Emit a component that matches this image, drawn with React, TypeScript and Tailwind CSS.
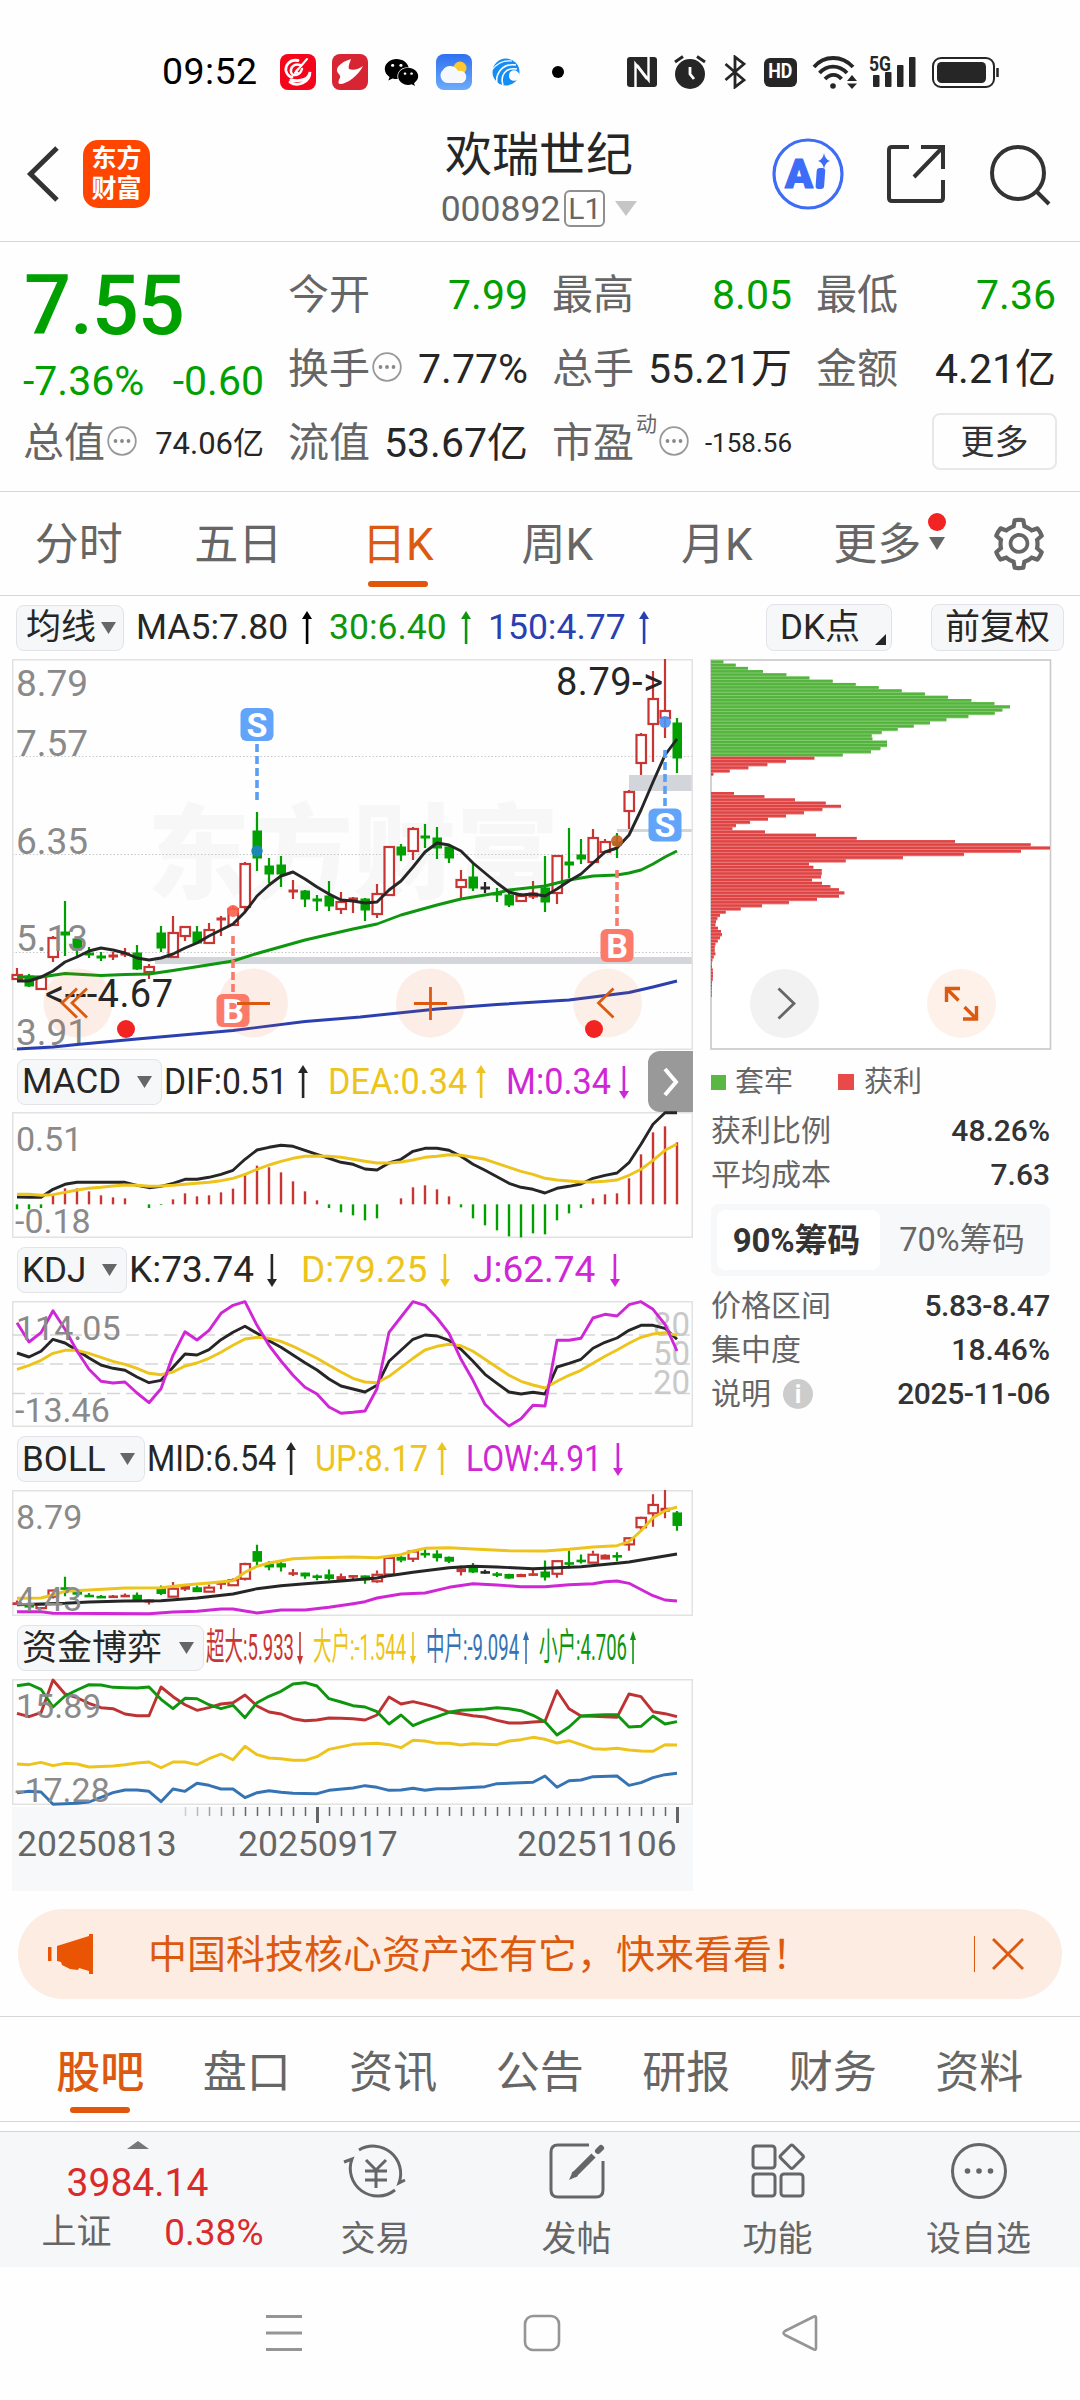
import type { ReactNode } from 'react'
import { AiOutlineSetting } from 'react-icons/ai'
import { FaWeixin } from 'react-icons/fa'

const RED = '#c83533'
const GREEN = '#00a000'
const DARK = '#262626'
const YELLOW = '#edc41c'
const PURPLE = '#cf27d6'
const BLUE = '#2a3fb0'
const ORANGE = '#dc5a10'

// [kind, high, bodyTop, bodyBottom, low], px below the top of the price pane
type Candle = ['r' | 'g' | 'k', number, number, number, number]

const CANDLES: Candle[] = [
  ['r', 309, 315, 320, 321], ['g', 315, 317, 327, 328], ['r', 317, 317, 330, 330], ['r', 277, 278, 298, 303],
  ['g', 242, 273, 276, 297], ['g', 279, 280, 291, 298], ['g', 288, 294, 296, 299], ['g', 293, 297, 299, 302],
  ['r', 293, 296, 298, 301], ['r', 289, 294, 296, 298], ['g', 286, 294, 310, 311], ['r', 305, 307, 313, 320],
  ['g', 267, 274, 289, 293], ['r', 257, 273, 298, 298], ['r', 267, 267, 277, 282], ['g', 267, 273, 284, 284],
  ['r', 264, 270, 284, 284], ['r', 257, 259, 261, 277], ['r', 247, 249, 266, 266], ['r', 203, 204, 248, 253],
  ['g', 153, 172, 199, 212], ['g', 199, 207, 215, 224], ['g', 197, 206, 215, 228], ['r', 221, 231, 233, 240],
  ['g', 231, 232, 240, 248], ['g', 236, 240, 242, 252], ['g', 222, 237, 247, 252], ['r', 233, 242, 250, 255],
  ['r', 238, 239, 242, 254], ['g', 239, 240, 251, 262], ['r', 225, 234, 255, 259], ['r', 187, 187, 236, 236],
  ['g', 185, 188, 196, 202], ['r', 168, 169, 192, 201], ['g', 165, 177, 179, 189], ['g', 168, 179, 189, 200],
  ['g', 186, 188, 199, 204], ['r', 211, 220, 228, 239], ['g', 204, 218, 229, 232], ['k', 223, 228, 230, 234],
  ['g', 229, 234, 236, 243], ['g', 234, 236, 246, 248], ['r', 234, 236, 242, 243], ['r', 222, 234, 238, 240],
  ['g', 197, 229, 243, 253], ['r', 196, 196, 234, 245], ['g', 169, 203, 206, 219], ['g', 180, 196, 200, 205],
  ['r', 170, 178, 203, 204], ['r', 180, 182, 193, 193], ['g', 174, 183, 186, 199], ['r', 131, 132, 152, 170],
  ['r', 74, 75, 104, 116], ['r', 12, 39, 65, 103], ['r', 0, 51, 59, 79], ['g', 59, 64, 99, 114],
]

const MA5 = [
  322, 322, 318, 312, 303, 298, 292, 289, 291, 294, 299, 301, 299, 295, 289, 284, 277, 271, 265, 253, 237, 226, 217,
  213, 220, 228, 235, 241, 242, 244, 243, 231, 222, 208, 193, 184, 186, 192, 204, 214, 224, 233, 236, 235, 237, 230,
  222, 215, 204, 193, 189, 176, 151, 123, 96, 80,
]

// sparse series: [day index, y]
type Point = [number, number]
const MA30: Point[] = [
  [0, 318], [2, 318], [4, 314.5], [7, 316.5], [9, 315.5], [11, 315], [13, 311.5], [18, 302], [20, 294.5], [24, 281],
  [28, 270], [30, 265], [32, 256], [35, 246], [37, 240], [40, 234], [41, 231], [44, 227], [46, 221], [48, 217],
  [50, 216], [51, 214], [52, 211], [53, 205], [54, 198], [55, 192],
]
const MA150: Point[] = [
  [0, 390], [3, 388], [5, 385.5], [10, 380], [18, 371.5], [24, 362.5], [28.6, 358], [35, 350], [40, 345.5],
  [46, 341], [51, 333.5], [53, 328], [55, 322],
]

// The series below are recorded at three units per pixel; `base` is the pane top.
const MACD_BASE = 188
const MACD_ZERO = 465
const MACD_BARS = [
  480, 480, 476, 438, 417, 417, 426, 438, 444, 447, 465, 476, 467, 450, 432, 441, 438, 429, 418, 373, 349, 354, 369,
  396, 426, 453, 476, 489, 498, 513, 507, 465, 447, 414, 408, 420, 441, 474, 507, 528, 543, 561, 564, 552, 555, 513,
  492, 476, 447, 435, 432, 387, 315, 249, 231, 279,
]
const DIF = [
  443, 444, 444, 420, 405, 399, 399, 399, 399, 399, 408, 415, 411, 402, 390, 390, 384, 375, 363, 330, 302, 294, 288,
  291, 303, 315, 327, 339, 345, 359, 362, 341, 330, 306, 297, 297, 303, 321, 345, 363, 382, 402, 414, 420, 431, 417,
  411, 404, 387, 378, 371, 340, 285, 225, 190, 190,
]
const DEA = [
  435, 435, 438, 436, 429, 422, 417, 414, 410, 407, 408, 411, 410, 408, 405, 402, 399, 394, 387, 375, 360, 347, 336,
  327, 321, 320, 321, 324, 330, 336, 341, 341, 338, 332, 324, 321, 316, 318, 324, 330, 342, 354, 366, 375, 387, 392,
  395, 398, 398, 396, 392, 378, 360, 333, 303, 284,
]

const KDJ_BASE = 755
const K = [
  911, 923, 906, 870, 881, 903, 926, 947, 957, 963, 983, 1000, 993, 954, 914, 917, 901, 871, 849, 831, 852, 874, 894,
  917, 940, 962, 989, 1010, 1019, 1028, 1008, 936, 903, 870, 857, 860, 873, 900, 936, 975, 1002, 1028, 1034, 1029,
  1034, 953, 942, 930, 897, 879, 866, 843, 828, 828, 837, 870,
]
const D = [
  960, 948, 933, 912, 903, 903, 912, 924, 936, 945, 957, 972, 976, 968, 950, 941, 927, 909, 888, 869, 864, 867, 876,
  891, 909, 927, 948, 968, 987, 998, 1000, 981, 954, 927, 902, 891, 885, 889, 906, 930, 954, 978, 996, 1007, 1016,
  996, 978, 963, 942, 921, 902, 882, 864, 854, 850, 858,
]
const J = [
  820, 878, 850, 784, 840, 905, 960, 996, 1001, 998, 1031, 1060, 1018, 918, 847, 872, 843, 792, 768, 757, 828, 888,
  935, 978, 1014, 1034, 1073, 1092, 1089, 1085, 1018, 849, 803, 757, 768, 806, 852, 930, 993, 1065, 1100, 1130, 1108,
  1068, 1070, 873, 873, 867, 806, 795, 800, 766, 757, 780, 825, 905,
]

const BOLL_BASE = 183
const BOLL_MID: Point[] = [
  [0, 527], [2, 525], [4, 523], [6, 519], [9, 516], [12, 515], [15, 507], [18, 495], [20, 479], [22, 470], [24, 464],
  [27, 456], [30, 447], [31, 440], [33, 430], [36, 416], [38, 412], [40, 414], [43, 419], [45, 416], [47, 413],
  [50, 403], [51, 399], [53, 387], [55, 375],
]
const BOLL_UP: Point[] = [
  [0, 508], [2, 507], [3, 498], [4, 487], [6, 483], [9, 477], [12, 476], [14, 468], [16, 462], [18, 455], [19, 430],
  [20, 412], [21, 402], [23, 389], [25, 386], [28, 384], [30, 386], [31, 382], [32, 377], [33, 366], [34, 358],
  [36, 356], [38, 360], [41, 365], [44, 366], [46, 361], [48, 354], [50, 350], [51, 338], [52, 305], [53, 266],
  [54, 245], [55, 234],
]
const BOLL_LOW: Point[] = [
  [0, 548], [2, 548], [3, 553], [11, 554], [13, 549], [15, 547], [17, 540], [18, 540], [19, 546], [20, 552],
  [22, 543], [24, 543], [26, 535], [28, 524], [29, 518], [30, 507], [32, 495], [34, 492], [36, 475], [38, 464],
  [40, 468], [42, 473], [44, 473], [46, 467], [48, 464], [49, 458], [50, 456], [51, 463], [53, 500], [54, 513],
  [55, 516],
]

const FLOW_BASE = 749
const FLOW_HUGE = [
  852, 862, 850, 752, 794, 805, 822, 835, 838, 854, 859, 859, 773, 802, 826, 843, 835, 824, 820, 797, 830, 848, 854,
  868, 874, 872, 866, 867, 868, 872, 857, 803, 824, 817, 825, 835, 848, 853, 859, 863, 873, 881, 881, 878, 876, 784,
  838, 860, 861, 862, 864, 794, 802, 847, 853, 862,
]
const FLOW_SMALL = [
  769, 764, 780, 833, 800, 782, 766, 767, 774, 775, 776, 773, 810, 838, 807, 808, 826, 838, 828, 865, 820, 801, 786,
  764, 760, 770, 808, 818, 829, 833, 847, 884, 857, 889, 874, 862, 849, 843, 841, 839, 835, 838, 844, 858, 877, 917,
  893, 860, 858, 856, 856, 893, 891, 860, 884, 877,
]
const FLOW_LARGE: Point[] = [
  [0, 1004], [1, 1006], [2, 999], [3, 1009], [4, 1002], [5, 1004], [6, 1013], [8, 1010], [9, 1006], [10, 1001],
  [11, 998], [12, 1015], [13, 998], [14, 998], [15, 1006], [16, 988], [17, 974], [18, 991], [19, 951], [20, 976],
  [21, 986], [22, 988], [23, 993], [24, 993], [25, 982], [26, 960], [28, 945], [30, 942], [31, 946], [32, 955],
  [33, 933], [34, 935], [35, 942], [36, 942], [37, 947], [38, 943], [40, 946], [41, 935], [42, 931], [43, 924],
  [44, 930], [45, 941], [46, 934], [47, 946], [48, 958], [49, 960], [50, 957], [51, 962], [52, 965], [53, 966],
  [54, 946], [55, 947],
]
const FLOW_MID: Point[] = [
  [0, 1090], [1, 1086], [2, 1088], [3, 1125], [5, 1122], [6, 1118], [7, 1104], [8, 1090], [9, 1082], [10, 1082],
  [11, 1086], [12, 1117], [13, 1079], [14, 1086], [15, 1062], [16, 1068], [17, 1079], [18, 1079], [19, 1105],
  [20, 1090], [21, 1084], [22, 1089], [23, 1092], [25, 1093], [26, 1083], [28, 1076], [29, 1069], [30, 1074],
  [31, 1083], [32, 1082], [33, 1077], [34, 1083], [35, 1078], [36, 1078], [39, 1072], [40, 1063], [43, 1059],
  [44, 1040], [45, 1074], [46, 1054], [47, 1052], [48, 1042], [50, 1040], [51, 1068], [52, 1060], [53, 1045],
  [54, 1036], [55, 1032],
]

// chip distribution, bar end per price level at three units per pixel
const CHIPS = [
  100, 137, 174, 219, 289, 358, 428, 497, 566, 635, 705, 774, 844, 913, 960, 937, 914, 835, 769, 720, 671, 623, 575,
  545, 547, 591, 591, 571, 543, 458, 373, 288, 232, 175, 119, 70, 63, 63, 63, 63, 63, 132, 223, 315, 407, 453, 397,
  342, 288, 234, 180, 138, 127, 225, 378, 500, 795, 1022, 1080, 993, 822, 639, 467, 357, 370, 395, 395, 393, 366,
  396, 421, 447, 463, 447, 381, 297, 216, 152, 107, 90, 82, 78, 76, 84, 93, 96, 90, 83, 76, 74, 74, 76, 71, 67, 65,
  66, 68, 69, 69, 68, 66, 66, 65, 65, 65,
]

const dayX = (i: number) => 5 + i * 12

function path(series: number[] | Point[], base?: number) {
  return series
    .map((p, i) => {
      const [day, v] = Array.isArray(p) ? p : [i, p]
      const y = base === undefined ? v : (v - base) / 3
      return `${i ? 'L' : 'M'}${dayX(day)} ${y.toFixed(1)}`
    })
    .join('')
}

function Line({ data, base, color }: { data: number[] | Point[]; base?: number; color: string }) {
  return <path d={path(data, base)} fill="none" stroke={color} strokeWidth={2.9} strokeLinejoin="round" />
}

function Candles({ scale = 1 }: { scale?: number }) {
  const minHollow = scale < 1 ? 4 : 4.5
  return (
    <g>
      {CANDLES.map(([kind, ...ys], i) => {
        const [high, top, bottom, low] = ys.map((v) => v * scale)
        const x = dayX(i)
        const color = kind === 'r' ? RED : kind === 'g' ? GREEN : DARK
        const hollow = kind === 'r' && bottom - top > minHollow
        return (
          <g key={i} stroke={color} strokeWidth={2.2}>
            <path d={`M${x} ${high}V${top}M${x} ${bottom}V${low}`} />
            {hollow ? (
              <rect x={x - 4.5} y={top + 1} width={9.5} height={bottom - top - 1} fill="white" />
            ) : (
              <rect
                x={x - 4.5}
                y={top - 0.5}
                width={9.5}
                height={Math.max(bottom - top + 1, 2.6)}
                fill={color}
                stroke="none"
              />
            )}
          </g>
        )
      })}
    </g>
  )
}

function Label({ x = 4, y, children, size = 37 }: { x?: number; y: number; children: ReactNode; size?: number }) {
  return (
    <text x={x} y={y} fontSize={size} fill="#8a8a8a">
      {children}
    </text>
  )
}

function Marker({ x, y, color, children }: { x: number; y: number; color: string; children: string }) {
  return (
    <g>
      <rect x={x - 16.5} y={y} width={33} height={33} rx={6} fill={color} />
      <text x={x} y={y + 28.5} fontSize={34} fontWeight={700} fill="white" textAnchor="middle">
        {children}
      </text>
    </g>
  )
}

function PriceChart() {
  return (
    <svg width={681} height={391} viewBox="0 0 681 391" className="block overflow-visible">
      <text x={135} y={232} fontSize={103} fontWeight={900} fill="#f7f7f7">
        东方财富
      </text>
      <g stroke="#c8c8c8" strokeDasharray="1.5 2">
        <path d="M0 97.5H681M0 195.5H681M0 293.5H681" />
      </g>
      <g fill="#d2d5da">
        <rect x={143} y={298} width={538} height={7} />
        <rect x={617} y={116} width={64} height={16} />
        <rect x={605} y={170} width={76} height={3} />
      </g>
      <rect x={0.75} y={0.75} width={679.5} height={389.5} fill="none" stroke="#e2e2e2" strokeWidth={1.5} />
      <Candles />
      <Label y={37}>8.79</Label>
      <Label y={97}>7.57</Label>
      <Label y={195}>6.35</Label>
      <Label y={292}>5.13</Label>
      <Label y={386}>3.91</Label>
      <Line data={MA150} color={BLUE} />
      <Line data={MA30} color="#0f960f" />
      <Line data={MA5} color={DARK} />
      <g fill="#ea5504" opacity={0.09}>
        <circle cx={66} cy={344} r={34.5} />
        <circle cx={241.5} cy={344} r={34.5} />
        <circle cx={418.5} cy={344} r={34.5} />
        <circle cx={595.5} cy={344} r={34.5} />
      </g>
      <text x={33} y={348} fontSize={38} fill={DARK} textLength={128}>
        &lt;---4.67
      </text>
      <text x={544} y={36} fontSize={38} fill={DARK} textLength={107}>
        8.79-&gt;
      </text>

      <g strokeWidth={3.6} strokeDasharray="8 4">
        <path d="M245 85V141" stroke="#5b9ff5" />
        <path d="M653 91V147" stroke="#5b9ff5" />
        <path d="M221 277V335" stroke="#f87b6c" />
        <path d="M605 211V268" stroke="#f87b6c" />
      </g>
      <circle cx={245} cy={192} r={5.7} fill="#1c86b4" />
      <circle cx={653} cy={63} r={6} fill="#4a92f5" opacity={0.9} />
      <circle cx={221} cy={252} r={6} fill="#f9604c" opacity={0.9} />
      <circle cx={605} cy={182} r={6} fill="#c65f22" opacity={0.9} />
      <Marker x={245} y={49} color="#61a4fa">S</Marker>
      <Marker x={653} y={149.5} color="#61a4fa">S</Marker>
      <Marker x={221} y={335} color="#fb7a69">B</Marker>
      <Marker x={605} y={270} color="#fb7a69">B</Marker>

      <g fill="none" stroke={ORANGE} strokeWidth={2.8}>
        <path d="M65 329.5L50 344L65 358.5M75 329.5L60 344L75 358.5" />
        <path d="M225 344.5H258" />
        <path d="M402 344.5H435M418.5 328V361" />
        <path d="M601.5 329.5L586.5 344L601.5 358.5" />
      </g>
      <circle cx={114} cy={370} r={9} fill="#f22323" />
      <circle cx={582} cy={370} r={9} fill="#f22323" />
    </svg>
  )
}

function Pane({ children }: { children: ReactNode }) {
  return (
    <svg width={681} height={126} viewBox="0 0 681 126" className="block overflow-visible">
      <rect x={0.75} y={0.75} width={679.5} height={124.5} fill="none" stroke="#e2e2e2" strokeWidth={1.5} />
      {children}
    </svg>
  )
}

function MacdChart() {
  const zero = (MACD_ZERO - MACD_BASE) / 3
  return (
    <Pane>
      <Label y={39} size={34}>0.51</Label>
      <Label x={3} y={121} size={34}>-0.18</Label>
      {MACD_BARS.map((v, i) => (
        <path
          key={i}
          d={`M${dayX(i)} ${zero}V${(v - MACD_BASE) / 3}`}
          stroke={v > MACD_ZERO ? GREEN : RED}
          strokeWidth={2.4}
        />
      ))}
      <Line data={DIF} base={MACD_BASE} color={DARK} />
      <Line data={DEA} base={MACD_BASE} color={YELLOW} />
    </Pane>
  )
}

function KdjChart() {
  return (
    <Pane>
      <path d="M0 34H681M0 63H681M0 92.5H681" stroke="#d6d6d6" strokeWidth={1.3} strokeDasharray="13 6" />
      <g fontSize={33} fill="#c9c9c9" textAnchor="end">
        <text x={678} y={35}>80</text>
        <text x={678} y={64}>50</text>
        <text x={678} y={93}>20</text>
      </g>
      <Line data={K} base={KDJ_BASE} color={DARK} />
      <Line data={D} base={KDJ_BASE} color={YELLOW} />
      <Line data={J} base={KDJ_BASE} color={PURPLE} />
      <Label y={39} size={34}>114.05</Label>
      <Label x={3} y={121} size={34}>-13.46</Label>
    </Pane>
  )
}

function BollChart() {
  return (
    <Pane>
      <Candles scale={0.358} />
      <Line data={BOLL_MID} base={BOLL_BASE} color={DARK} />
      <Line data={BOLL_UP} base={BOLL_BASE} color={YELLOW} />
      <Line data={BOLL_LOW} base={BOLL_BASE} color={PURPLE} />
      <Label y={39} size={34}>8.79</Label>
      <Label y={121} size={34}>4.43</Label>
    </Pane>
  )
}

function FlowChart() {
  return (
    <Pane>
      <Line data={FLOW_HUGE} base={FLOW_BASE} color="#bd3232" />
      <Line data={FLOW_LARGE} base={FLOW_BASE} color={YELLOW} />
      <Line data={FLOW_MID} base={FLOW_BASE} color="#3673b5" />
      <Line data={FLOW_SMALL} base={FLOW_BASE} color="#0f960f" />
      <Label y={39} size={34}>15.89</Label>
      <Label x={3} y={123} size={34}>-17.28</Label>
    </Pane>
  )
}

function DateAxis() {
  return (
    <div className="mt-0.5 h-[84px] bg-[#f7f8fa]">
      <svg width={681} height={17} className="block">
        {CANDLES.map((_, i) => {
          if (i < 14) return null
          const major = i === 25 || i === 55
          return (
            <path
              key={i}
              d={`M${dayX(i) + 0.5} 0V${major ? 16 : 9}`}
              stroke="#666"
              strokeWidth={major ? 3 : 1.5}
              opacity={major ? 1 : Math.min(1, (i - 12) / 7)}
            />
          )
        })}
      </svg>
      <div className="flex pl-[5px] text-[35.5px] leading-[40px] text-[#666]">
        <span className="w-[221px]">20250813</span>
        <span className="w-[279px]">20250917</span>
        <span>20251106</span>
      </div>
    </div>
  )
}

function Arrow({ up, thin }: { up?: boolean; thin?: boolean }) {
  return (
    <svg width={12} height={34} viewBox="0 0 12 34" className="shrink-0" fill="currentColor">
      <g transform={up ? undefined : 'rotate(180 6 17)'}>
        <path d={thin ? 'M6 0L9 9H3Z' : 'M6 0L11 8H1Z'} />
        <rect x={thin ? 5.2 : 4.8} y={5} width={thin ? 1.6 : 2.6} height={28} />
      </g>
    </svg>
  )
}

function Dropdown({ children, className }: { children: string; className: string }) {
  return (
    <button
      className={`flex h-[46px] shrink-0 items-center justify-between rounded-lg border-[1.5px] border-[#e1e3e8] bg-[#f6f7f9] text-[35px] leading-none text-[#262626] ${className}`}
    >
      <span>{children}</span>
      <svg width={15} height={12} viewBox="0 0 15 12" fill="#666">
        <path d="M0 0H15L7.5 12Z" />
      </svg>
    </button>
  )
}

interface LegendItem {
  text: string
  up?: boolean
  thin?: boolean
  cell: string
  label: string
  squeeze: string
}

function Legend({ items }: { items: LegendItem[] }) {
  return (
    <>
      {items.map((item) => (
        <div key={item.text} className={`flex shrink-0 items-center ${item.cell}`}>
          <span className={`shrink-0 ${item.label}`}>
            <span className={`inline-block origin-left leading-[44px] whitespace-nowrap ${item.squeeze}`}>
              {item.text}
            </span>
          </span>
          <Arrow up={item.up} thin={item.thin} />
        </div>
      ))}
    </>
  )
}

const MACD_LEGEND: LegendItem[] = [
  { text: 'DIF:0.51', up: true, cell: 'w-[164px] text-[#262626]', label: 'w-[133px]', squeeze: 'scale-x-[0.91]' },
  { text: 'DEA:0.34', up: true, cell: 'w-[178px] text-[#edc41c]', label: 'w-[147px]', squeeze: 'scale-x-[0.925]' },
  { text: 'M:0.34', cell: 'w-[129px] text-[#cf27d6]', label: 'w-[112px]', squeeze: 'scale-x-[0.925]' },
]
const KDJ_LEGEND: LegendItem[] = [
  { text: 'K:73.74', cell: 'w-[172px] text-[#262626]', label: 'w-[137px]', squeeze: 'scale-x-100' },
  { text: 'D:79.25', cell: 'w-[172px] text-[#edc41c]', label: 'w-[138px]', squeeze: 'scale-x-100' },
  { text: 'J:62.74', cell: 'w-[160px] text-[#cf27d6]', label: 'w-[136px]', squeeze: 'scale-x-100' },
]
const BOLL_LEGEND: LegendItem[] = [
  { text: 'MID:6.54', up: true, cell: 'w-[168px] text-[#262626]', label: 'w-[138px]', squeeze: 'scale-x-[0.875]' },
  { text: 'UP:8.17', up: true, cell: 'w-[151px] text-[#edc41c]', label: 'w-[121px]', squeeze: 'scale-x-[0.88]' },
  { text: 'LOW:4.91', cell: 'w-[170px] text-[#cf27d6]', label: 'w-[146px]', squeeze: 'scale-x-[0.86]' },
]
const FLOW_LEGEND: LegendItem[] = [
  { text: '超大:5.933', thin: true, cell: 'w-[107px] text-[#c83533]', label: 'w-[88px]', squeeze: 'scale-x-[0.5]' },
  { text: '大户:-1.544', thin: true, cell: 'w-[113px] text-[#edc41c]', label: 'w-[94px]', squeeze: 'scale-x-[0.5]' },
  { text: '中户:-9.094', thin: true, up: true, cell: 'w-[113px] text-[#3673b5]', label: 'w-[94px]', squeeze: 'scale-x-[0.5]' },
  { text: '小户:4.706', thin: true, up: true, cell: 'w-[107px] text-[#0f960f]', label: 'w-[88px]', squeeze: 'scale-x-[0.5]' },
]

function StatusBar() {
  return (
    <div className="flex h-[125px] items-center pt-[19px] pl-[162px] text-[#262626]">
      <span className="w-[118px] text-[37.5px] leading-none tracking-[0.4px] text-black">09:52</span>
      <svg width={36} height={36} viewBox="0 0 36 36">
        <rect width={36} height={36} rx={8} fill="#f5051a" />
        <g fill="none" stroke="white" strokeLinecap="round">
          <path d="M18 6.500C10 5 5 11 6 17C7 21 10 23 12 23" strokeWidth={2.8} />
          <path d="M27 5L15 19" strokeWidth={2} />
          <path d="M20 11C14 9 10 14 11 18C12 23 20 22 22 15" strokeWidth={2.4} />
          <path d="M10 28C17 33 30 29 30 18C29 25 22 28 11 26" strokeWidth={2.8} />
          <path d="M18 15C15 17 16 19 18 19" strokeWidth={1.8} />
        </g>
      </svg>
      <svg width={36} height={36} viewBox="0 0 36 36" className="ml-4">
        <rect width={36} height={36} rx={8} fill="#d82533" />
        <path
          d="M19 5C12 7 4 12 5 17C6 20 9 21 8 24C6 27 6 30 8 30C15 30 26 22 31 12C27 15 21 17 17 15C16 12 18 8 19 5Z"
          fill="white"
        />
      </svg>
      <FaWeixin size={35} className="ml-4 text-black" />
      <svg width={36} height={36} viewBox="0 0 36 36" className="ml-[17px]">
        <defs>
          <linearGradient id="sky" x1="0" y1="0" x2="0" y2="1">
            <stop offset="0" stopColor="#2f71f0" />
            <stop offset="1" stopColor="#6cabfb" />
          </linearGradient>
        </defs>
        <rect width={36} height={36} rx={8} fill="url(#sky)" />
        <circle cx={24} cy={14} r={6.5} fill="#fdc92e" />
        <path d="M12 29A7.5 7.5 0 0 1 7 16A8.500 8.500 0 0 1 22 17A6 6 0 0 1 26 29Z" fill="#f5f8ff" />
      </svg>
      <svg width={28} height={28} viewBox="0 0 28 28" className="ml-5">
        <circle cx={14} cy={14} r={13.5} fill="#148df5" />
        <path d="M28 17C25 10 17 11 17 18C17 22 21 24 26 22L29 16Z" fill="#fefefe" />
        <g fill="none" stroke="white" strokeWidth={1.6}>
          <path d="M5 26C3 15 11 5 24 7" />
          <path d="M11 27C8 18 13 9 25 11" />
          <path d="M0 12C5 5 12 2 20 3" strokeWidth={1.2} />
        </g>
      </svg>
      <span className="ml-[32px] size-3 rounded-full bg-black" />

      <svg width={30} height={30} viewBox="0 0 30 30" className="ml-[63px]">
        <rect width={30} height={30} rx={3} fill="currentColor" />
        <path d="M8.500 30V7L20 22" fill="none" stroke="white" strokeWidth={2.4} />
        <path d="M21.500 0V23L10 8" fill="none" stroke="white" strokeWidth={2.4} />
      </svg>
      <svg width={32} height={34} viewBox="0 0 32 34" className="ml-[17px]">
        <circle cx={16} cy={19} r={15} fill="currentColor" />
        <path d="M1 7L9 1.500M31 7L23 1.500" stroke="currentColor" strokeWidth={3} />
        <path d="M16 12V19L20 24" fill="none" stroke="white" strokeWidth={2.800} />
      </svg>
      <svg width={22} height={34} viewBox="0 0 22 34" className="ml-[18px]" fill="none">
        <path d="M1.500 9L20 25L11 32V2L20 9L1.500 25" stroke="currentColor" strokeWidth={2.800} />
      </svg>
      <span className="ml-[18px] flex h-[29px] w-[33px] items-center justify-center rounded-md bg-[#262626] text-[21px] font-bold text-white">
        <span className="scale-x-[0.85]">HD</span>
      </span>
      <svg width={46} height={34} viewBox="0 0 46 34" className="ml-[15px]" fill="none">
        <g stroke="currentColor" strokeWidth={3.800}>
          <path d="M2 12C12 0 30 0 41 12" />
          <path d="M7.500 18C15 9.500 27 9.500 35 18" />
          <path d="M13 24C18 18.500 25 18.500 29.500 24" />
        </g>
        <circle cx={21} cy={31} r={2.800} fill="currentColor" />
        <path d="M40 20L45 26H35ZM40 34L45 28.500H35Z" fill="currentColor" />
      </svg>
      <svg width={48} height={34} viewBox="0 0 48 34" className="ml-[11px] overflow-visible" fill="currentColor">
        <text x={0} y={15.500} fontSize={21} fontWeight={700} textLength={22} lengthAdjust="spacingAndGlyphs">
          5G
        </text>
        <rect x={4} y={20} width={6.500} height={12} rx={1} />
        <rect x={16} y={17} width={6.500} height={15} rx={1} />
        <rect x={28} y={10} width={6.500} height={22} rx={1} />
        <rect x={40} y={2} width={6.500} height={30} rx={1} />
      </svg>
      <svg width={67} height={31} viewBox="0 0 67 31" className="ml-[15px]">
        <rect x={1} y={1} width={61} height={29} rx={8} fill="none" stroke="currentColor" strokeWidth={2} />
        <rect x={5} y={5} width={49} height={21} rx={4.500} fill="currentColor" />
        <path d="M65.500 11V20" stroke="currentColor" strokeWidth={2.500} />
      </svg>
    </div>
  )
}

function Header() {
  return (
    <header className="flex h-[117px] items-center border-b border-[#d6d6d6] pl-[26px]">
      <svg width={34} height={56} viewBox="0 0 34 56" className="mt-[-18px]" fill="none">
        <path d="M31 2L4.500 28L31 54" stroke="#333" strokeWidth={5} />
      </svg>
      <div className="mt-[-18px] ml-[23px] flex h-[68px] w-[67px] flex-col items-center justify-center rounded-[15px] bg-[#ff4600] text-[25px] leading-[30px] font-bold text-white">
        <span>东方</span>
        <span>财富</span>
      </div>
      <div className="ml-[229px] flex w-[320px] flex-col items-center">
        <h1 className="mt-[-11px] text-[47px] leading-[56px] text-[#262626]">欢瑞世纪</h1>
        <div className="mt-[6px] flex items-center text-[35.5px] leading-[40px] text-[#666]">
          <span>000892</span>
          <span className="ml-1 flex h-[37px] w-[41px] items-center justify-center rounded-md border-2 border-[#8f8f8f] text-[30px] leading-none">
            L1
          </span>
          <svg width={22} height={15} className="ml-[10px]" fill="#c6c6c6">
            <path d="M0 0H22L11 15Z" />
          </svg>
        </div>
      </div>
      <svg width={72} height={72} viewBox="0 0 72 72" className="mt-[-18px] ml-[73px]">
        <circle cx={36} cy={36} r={34} fill="none" stroke="#3d6cf6" strokeWidth={3.2} />
        <text
          x={13}
          y={50}
          fontSize={41}
          fontWeight={900}
          fill="#3d6cf6"
          stroke="#3d6cf6"
          strokeWidth={1.2}
          strokeLinejoin="round"
          textLength={28}
          lengthAdjust="spacingAndGlyphs"
        >
          A
        </text>
        <rect x={44} y={30} width={8.500} height={21} rx={3} fill="#3d6cf6" transform="skewX(-4) translate(3 0)" />
        <path d="M52 15Q53 21.500 58 23Q53 24.500 52 31Q51 24.500 46 23Q51 21.500 52 15Z" fill="#3d6cf6" />
      </svg>
      <svg width={60} height={60} viewBox="0 0 60 60" className="mt-[-18px] ml-[42px]" fill="none">
        <path d="M23 3H6Q3 3 3 6V54Q3 57 6 57H54Q57 57 57 54V36" stroke="#333" strokeWidth={4} />
        <path d="M35 3H57V25M57 3L28 33" stroke="#333" strokeWidth={4} />
      </svg>
      <svg width={62} height={62} viewBox="0 0 62 62" className="mt-[-16px] ml-[44px]" fill="none">
        <circle cx={28} cy={29} r={26} stroke="#333" strokeWidth={4} />
        <path d="M46 47L59 60" stroke="#333" strokeWidth={4} />
      </svg>
    </header>
  )
}

function MoreDots() {
  return (
    <svg width={30} height={30} viewBox="0 0 30 30" className="mb-1 shrink-0">
      <circle cx={15} cy={15} r={13.8} fill="none" stroke="#999" strokeWidth={1.800} />
      <g fill="#888">
        <circle cx={8.500} cy={15} r={1.900} />
        <circle cx={15} cy={15} r={1.900} />
        <circle cx={21.500} cy={15} r={1.900} />
      </g>
    </svg>
  )
}

interface StatProps {
  label: string
  value: string
  dots?: boolean
  sup?: string
  className?: string
}

function Stat({ label, value, dots, sup, className = 'text-[41px] text-[#262626]' }: StatProps) {
  return (
    <div className="flex h-[74px] items-center leading-none whitespace-nowrap">
      <span className="text-[41px] text-[#666]">{label}</span>
      {sup && <span className="ml-[2px] self-start pt-[8px] text-[21px] text-[#666]">{sup}</span>}
      {dots && <span className="ml-[2px]"><MoreDots /></span>}
      <span className={`ml-auto ${className}`}>{value}</span>
    </div>
  )
}

function Quote() {
  const green = 'text-[41px] text-[#00a000]'
  return (
    <section className="flex h-[250px] border-b border-[#d6d6d6] pt-[16px] pr-[24px] pl-[23px]">
      <div className="w-[241px] text-[#00a000]">
        <div className="h-[88px] pt-[6px] pl-[1px] text-[83px] leading-[84px] font-medium tracking-[-1.2px]">7.55</div>
        <div className="flex h-[60px] items-center justify-between pt-[10px] text-[41px] leading-none">
          <span>-7.36%</span>
          <span>-0.60</span>
        </div>
        <Stat label="总值" value="74.06亿" dots className="text-[31px] text-[#262626]" />
      </div>
      <div className="ml-[24px] w-[240px]">
        <Stat label="今开" value="7.99" className={green} />
        <Stat label="换手" value="7.77%" dots />
        <Stat label="流值" value="53.67亿" />
      </div>
      <div className="ml-[24px] w-[240px]">
        <Stat label="最高" value="8.05" className={green} />
        <Stat label="总手" value="55.21万" />
        <Stat label="市盈" value="-158.56" sup="动" dots className="text-[26px] text-[#262626]" />
      </div>
      <div className="ml-[24px] w-[240px]">
        <Stat label="最低" value="7.36" className={green} />
        <Stat label="金额" value="4.21亿" />
        <div className="flex h-[71px] items-center justify-end">
          <button className="mr-[-1px] h-[57px] w-[125px] rounded-lg border-2 border-[#e8e8e8] text-[34px] leading-none text-[#333]">
            更多
          </button>
        </div>
      </div>
    </section>
  )
}

const PERIODS = ['分时', '五日', '日K', '周K', '月K']

function PeriodTabs() {
  return (
    <nav className="flex h-[104px] items-center border-b border-[#d6d6d6] text-[44px] leading-none text-[#666]">
      {PERIODS.map((p) => (
        <div
          key={p}
          className={`relative flex h-full w-[159.500px] items-center justify-center pt-[3px] pr-[2px] ${p === '日K' ? 'text-[#dc5a10]' : ''}`}
        >
          {p}
          {p === '日K' && <span className="absolute bottom-[8px] h-[6px] w-[60px] rounded-full bg-[#e0560a]" />}
        </div>
      ))}
      <div className="relative flex h-full w-[159.500px] items-center justify-center pt-[3px]">
        更多
        <span className="absolute top-[21px] right-[11px] size-[18px] rounded-full bg-[#f22323]" />
        <svg width={16} height={13} className="absolute top-[45px] right-[12px]" fill="#666">
          <path d="M0 0H16L8 13Z" />
        </svg>
      </div>
      <div className="flex flex-1 justify-center">
        <AiOutlineSetting size={60} />
      </div>
    </nav>
  )
}

function Toolbar() {
  const button =
    'h-[47px] rounded-lg border-[1.5px] border-[#e1e3e8] bg-[#f6f7f9] text-[35px] leading-none text-[#262626]'
  return (
    <div className="flex h-[63px] items-center pr-4 pl-4 text-[35.5px] leading-none">
      <Dropdown className="w-[108px] pr-[7px] pl-[9px]">均线</Dropdown>
      <span className="ml-[12px] w-[165px] text-[#262626]">MA5:7.80</span>
      <Arrow up />
      <span className="ml-[15px] w-[132px] pl-[1px] text-[#0f960f]">30:6.40</span>
      <span className="text-[#0f960f]"><Arrow up /></span>
      <span className="ml-[15px] w-[151px] pl-[1px] text-[#2a3fb0]">150:4.77</span>
      <span className="text-[#2a3fb0]"><Arrow up /></span>
      <button className={`ml-auto flex w-[126px] items-end justify-between pr-[5px] pb-[5px] pl-[13px] ${button}`}>
        <span>DK点</span>
        <svg width={11} height={11} fill="#262626">
          <path d="M11 0V11H0Z" />
        </svg>
      </button>
      <button className={`ml-[39px] w-[133px] ${button}`}>前复权</button>
    </div>
  )
}

function ChipChart() {
  return (
    <svg width={342} height={391} viewBox="0 0 342 391" className="block">
      <rect x={1} y={1} width={339.500} height={389} fill="white" stroke="#c9c9c9" strokeWidth={1.600} />
      {CHIPS.map((end, i) => {
        const width = (end - 63) / 3
        const y = 1.500 + i * 3.208
        return (
          <g key={i}>
            <rect x={1} y={y} width={width} height={3.300} fill={i < 30 ? '#86cb74' : '#f08080'} />
            <rect x={1} y={y} width={width} height={2.400} fill={i < 30 ? '#55b43e' : '#de4444'} />
          </g>
        )
      })}
      <circle cx={74.500} cy={344.500} r={34.500} fill="#f2f2f2" />
      <path d="M68.500 329.500L84 344.500L68.500 359.500" fill="none" stroke="#666" strokeWidth={2.800} />
      <circle cx={251.500} cy={344.500} r={34.500} fill="#fdf1ea" />
      <g fill="none" stroke={ORANGE} strokeWidth={3.400}>
        <path d="M250 329.500H236.500V343M236.500 329.500L248.500 341.500" />
        <path d="M266.500 347V360H253M266.500 360L254.500 348" />
      </g>
    </svg>
  )
}

interface ChipRowProps {
  label: string
  value: string
  info?: boolean
  tight?: boolean
}

function ChipRow({ label, value, info, tight }: ChipRowProps) {
  return (
    <div className="flex h-[44px] items-center justify-between text-[30px] leading-none">
      <span className="flex items-center text-[30px] text-[#666]">
        {label}
        {info && (
          <span className="ml-[12px] flex size-[30px] items-center justify-center rounded-full bg-[#ccc] text-[25px] font-bold text-white">
            i
          </span>
        )}
      </span>
      <span className={`font-medium text-[#333] ${tight ? 'tracking-[-0.4px]' : ''}`}>{value}</span>
    </div>
  )
}

function ChipPanel() {
  return (
    <aside className="ml-[17px] w-[342px]">
      <ChipChart />
      <div className="pr-[2px] pl-[1px]">
        <div className="flex h-[59px] items-center pt-[5px] text-[29px] leading-none text-[#666]">
          <span className="mr-[9px] size-[15px] bg-[#5ab744]" />
          套牢
          <span className="mr-[10px] ml-[45px] size-[16px] bg-[#e84a4a]" />
          获利
        </div>
        <ChipRow label="获利比例" value="48.26%" />
        <ChipRow label="平均成本" value="7.63" />
        <div className="mt-[7px] mb-[8px] flex h-[72px] items-center rounded-lg bg-[#f7f8fa] p-[6px] text-[32px] leading-none">
          <span className="flex h-full w-[163px] items-center justify-center rounded-lg bg-white pr-[4px] text-[33px] font-bold tracking-[-0.2px] text-[#333]">
            90%筹码
          </span>
          <span className="flex-1 text-center text-[32.500px] text-[#666]">70%筹码</span>
        </div>
        <ChipRow label="价格区间" value="5.83-8.47" tight />
        <ChipRow label="集中度" value="18.46%" />
        <ChipRow label="说明" value="2025-11-06" info tight />
      </div>
    </aside>
  )
}

function Charts() {
  const row = 'flex items-center pt-px pl-[5px] text-[37px] leading-none'
  return (
    <div className="flex pl-3">
      <div className="w-[681px]">
        <PriceChart />
        <div className={`h-[62px] ${row}`}>
          <Dropdown className="mr-[2px] w-[145px] pr-[9px] pl-[4px]">MACD</Dropdown>
          <Legend items={MACD_LEGEND} />
          <span className="ml-auto flex h-[61px] w-[45px] shrink-0 items-center justify-center rounded-l-xl bg-[#999]">
            <svg width={16} height={30} viewBox="0 0 16 30" fill="none">
              <path d="M2 2L13 15L2 28" stroke="white" strokeWidth={4} />
            </svg>
          </span>
        </div>
        <MacdChart />
        <div className={`h-[63px] ${row}`}>
          <Dropdown className="mr-[2px] w-[110px] pr-[9px] pl-[4px]">KDJ</Dropdown>
          <Legend items={KDJ_LEGEND} />
        </div>
        <KdjChart />
        <div className={`h-[63px] ${row}`}>
          <Dropdown className="mr-[2px] w-[128px] pr-[9px] pl-[4px]">BOLL</Dropdown>
          <Legend items={BOLL_LEGEND} />
        </div>
        <BollChart />
        <div className={`h-[63px] ${row} text-[35px]`}>
          <Dropdown className="mr-[2px] w-[187px] pr-[9px] pl-[4px]">资金博弈</Dropdown>
          <Legend items={FLOW_LEGEND} />
        </div>
        <FlowChart />
        <DateAxis />
      </div>
      <ChipPanel />
    </div>
  )
}

function Banner() {
  return (
    <div className="mx-[18px] mt-[18px] flex h-[90px] items-center rounded-full bg-[#fcece2] pl-[30px] text-[39px] leading-none text-[#dc5a10]">
      <svg width={46} height={40} viewBox="0 0 46 40" fill="#ea5504">
        <rect x={0} y={13} width={3.500} height={14} />
        <path d="M9 12L41 2V0H45V40H41V37L31 34L30 36L22 35L14 31L13 28L9 27Z" />
      </svg>
      <span className="ml-[54px] pt-[2px] whitespace-nowrap">中国科技核心资产还有它，快来看看！</span>
      <span className="ml-auto h-[36px] w-[1.500px] bg-[#dc5a10]" />
      <svg width={32} height={34} viewBox="0 0 32 34" className="mr-[38px] ml-[17px]">
        <path d="M1 2L31 32M31 2L1 32" stroke={ORANGE} strokeWidth={3} />
      </svg>
    </div>
  )
}

const SECTIONS = ['股吧', '盘口', '资讯', '公告', '研报', '财务', '资料']

function SectionTabs() {
  return (
    <nav className="mt-[17px] flex h-[106px] border-y border-[#d6d6d6] pl-[27px] text-[44px] leading-none text-[#666]">
      {SECTIONS.map((s, i) => (
        <div
          key={s}
          className={`relative flex h-full w-[146.500px] items-center justify-center pt-[8px] ${i === 0 ? 'font-medium text-[#dc5a10]' : ''}`}
        >
          {s}
          {i === 0 && <span className="absolute bottom-[8px] h-[6px] w-[60px] rounded-full bg-[#e0560a]" />}
        </div>
      ))}
    </nav>
  )
}

function Action({ label, children }: { label: string; children: ReactNode }) {
  return (
    <div className="flex w-[201px] flex-col items-center text-[35px] leading-none text-[#666]">
      <svg width={68} height={60} viewBox="0 0 68 60" className="mt-[9px]" fill="none" stroke="#666" strokeWidth={3}>
        {children}
      </svg>
      <span className="mt-[21px]">{label}</span>
    </div>
  )
}

function BottomBar() {
  return (
    <div className="mt-[9px] flex h-[136px] border-t border-[#d0d6d9] bg-[#f6f7f9]">
      <div className="flex w-[275px] flex-col items-center pt-[9px] text-[#d92b2b]">
        <svg width={22} height={8} fill="#777">
          <path d="M0 8L11 0L22 8Z" />
        </svg>
        <span className="mt-[15px] text-[39px] leading-[38px]">3984.14</span>
        <div className="mt-[12px] ml-[30px] flex w-[222px] items-center justify-between text-[37px] leading-[38px]">
          <span className="text-[35px] text-[#666]">上证</span>
          <span>0.38%</span>
        </div>
      </div>
      <Action label="交易">
        <path d="M17 9A27.500 27.500 0 0 1 57 42L63 39" />
        <path d="M53 49A27.500 27.500 0 0 1 10 18L2 21" />
        <path d="M24 19L34 29L44 19M23 30H45M23 39H45M34 29V47" />
      </Action>
      <Action label="发帖">
        <path d="M46 4H15Q8 4 8 11V49Q8 56 15 56H53Q60 56 60 49V20" />
        <path d="M30 30L26 39L35 35Z" fill="#666" stroke="none" />
        <path d="M30.500 34.500L50.500 14.500" strokeWidth={6} />
        <path d="M55 10L58 7" strokeWidth={6} strokeLinecap="round" />
      </Action>
      <Action label="功能">
        <rect x={9} y={5} width={22} height={22} rx={3} />
        <rect x={9} y={33} width={22} height={22} rx={3} />
        <rect x={37} y={33} width={22} height={22} rx={3} />
        <rect x={39} y={7} width={17.500} height={17.500} rx={2} transform="rotate(45 47.750 15.750)" />
      </Action>
      <Action label="设自选">
        <circle cx={34} cy={30} r={26.500} />
        <g fill="#666" stroke="none">
          <circle cx={22.500} cy={30} r={2.800} />
          <circle cx={34} cy={30} r={2.800} />
          <circle cx={45.500} cy={30} r={2.800} />
        </g>
      </Action>
    </div>
  )
}

function SystemNav() {
  return (
    <div className="flex h-[132px] items-center pl-[265px]">
      <svg width={38} height={38} stroke="#959595" strokeWidth={3}>
        <path d="M1 2.500H37M1 19H37M1 35.500H37" />
      </svg>
      <svg width={38} height={38} className="ml-[220px]" fill="none" stroke="#959595" strokeWidth={2.600}>
        <rect x={2} y={2} width={34} height={34} rx={8} />
      </svg>
      <svg width={38} height={38} className="ml-[220px]" fill="none" stroke="#959595" strokeWidth={2.600} strokeLinejoin="round">
        <path d="M35 4Q35 1 32 3L4 17Q1 19 4 21L32 35Q35 37 35 34Z" />
      </svg>
    </div>
  )
}

export default function App() {
  return (
    <div className="h-[2400px] w-[1080px] overflow-hidden bg-[#fefefe] font-[Roboto,'Noto_Sans_CJK_SC',sans-serif]">
      <StatusBar />
      <Header />
      <Quote />
      <PeriodTabs />
      <Toolbar />
      <Charts />
      <Banner />
      <SectionTabs />
      <BottomBar />
      <SystemNav />
    </div>
  )
}
